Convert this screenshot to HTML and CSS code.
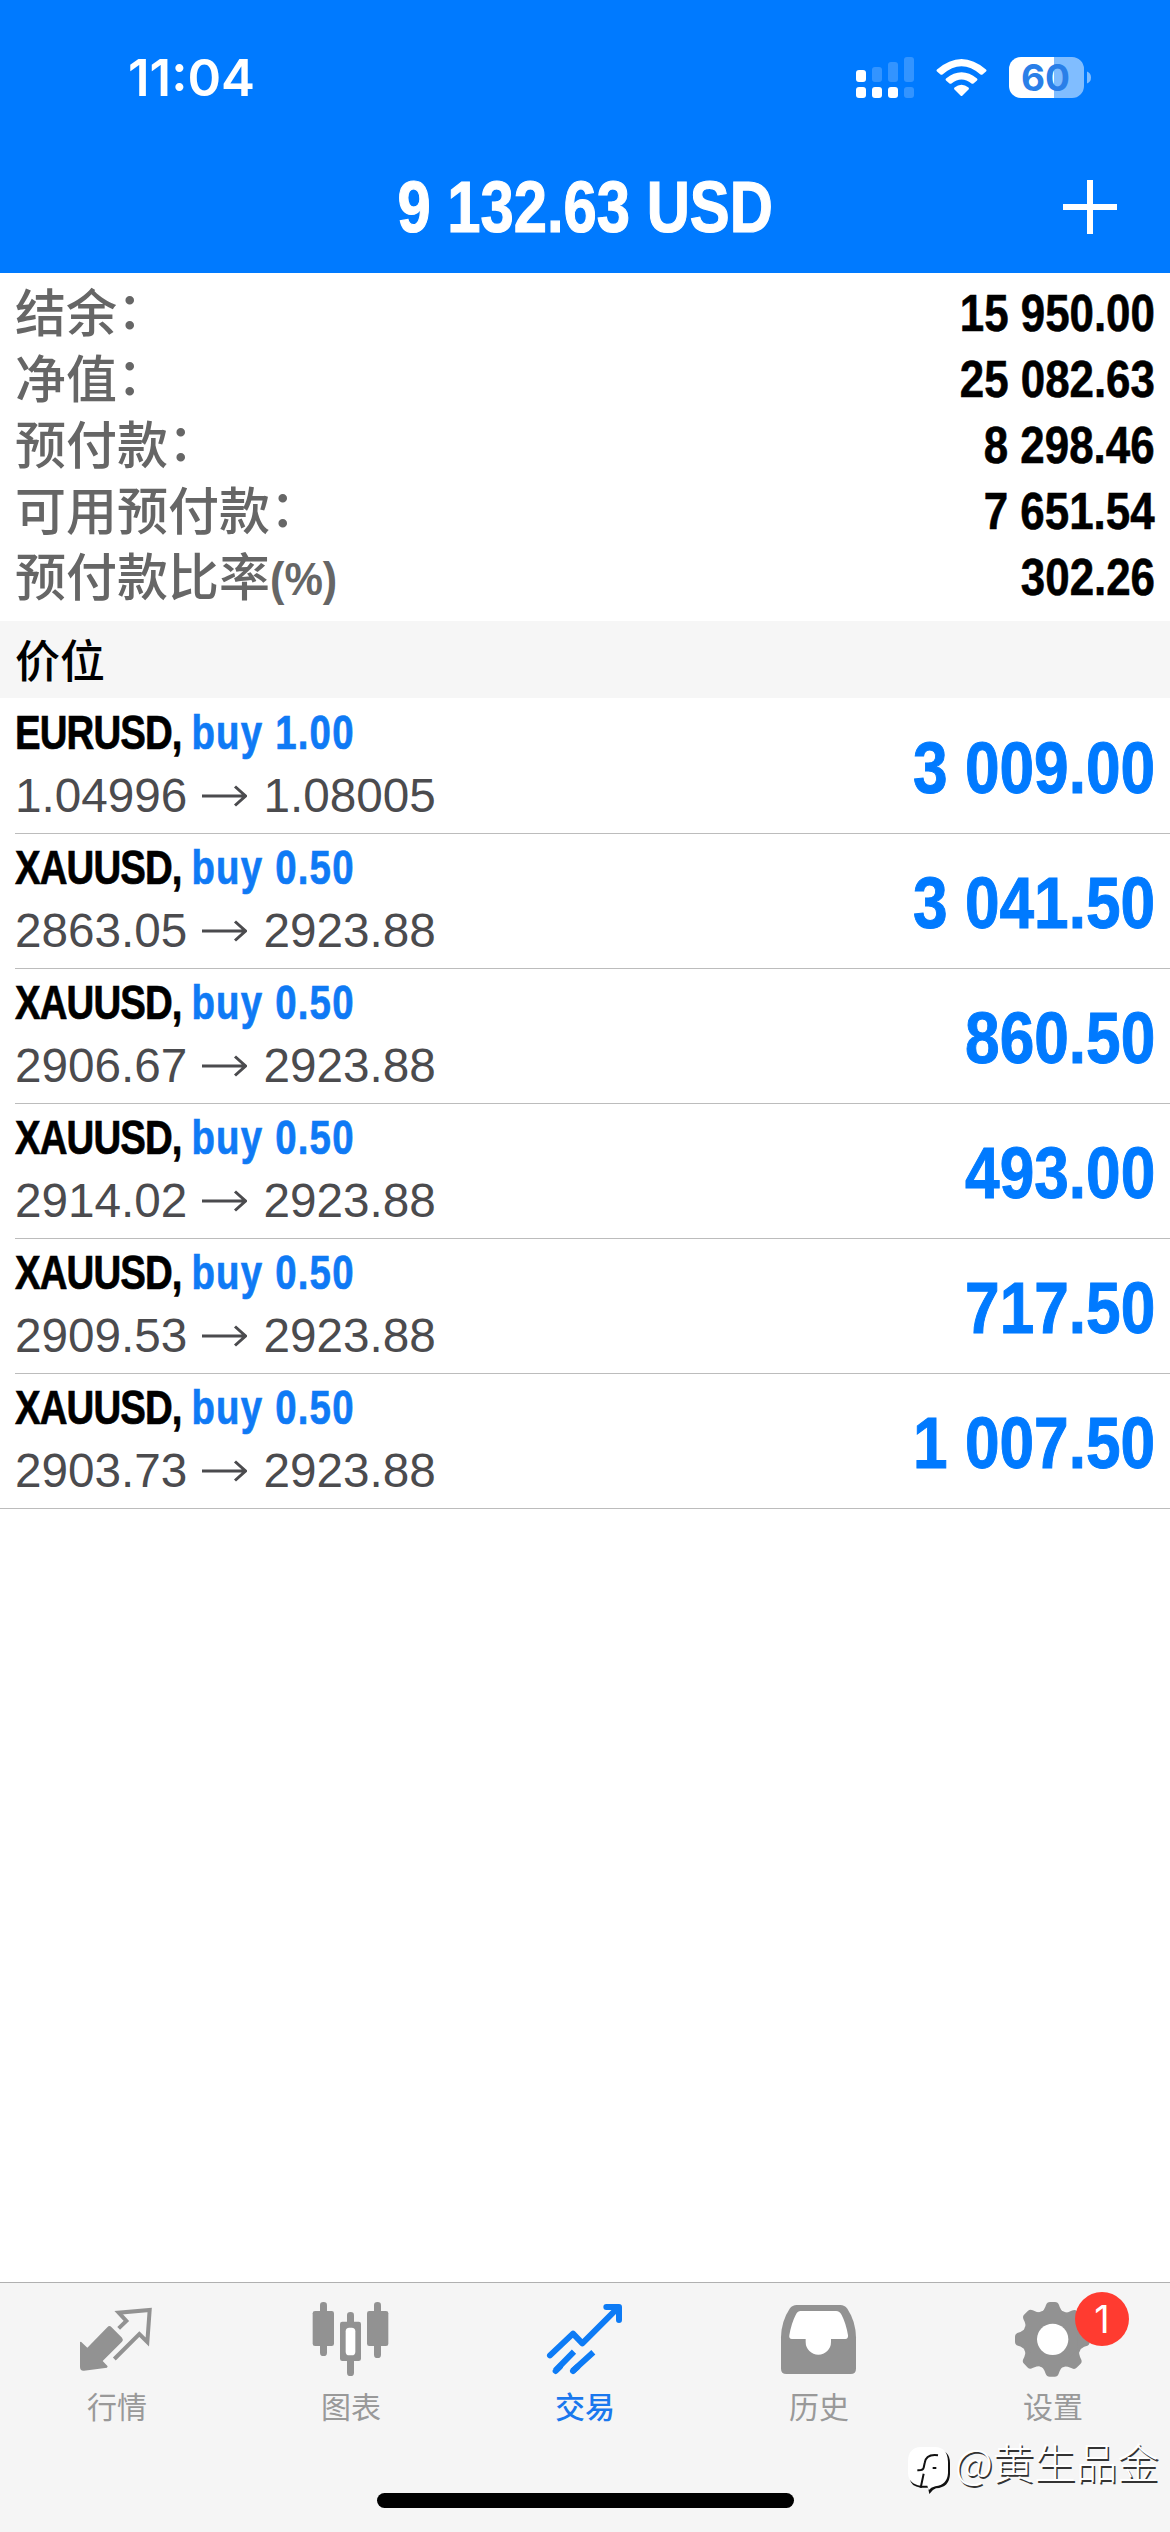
FILE: index.html
```html
<!DOCTYPE html>
<html lang="zh-CN">
<head>
<meta charset="utf-8">
<title>交易</title>
<link rel="stylesheet" href="styles.css">
</head>
<body>
<div class="app">
  <header class="header">
    <div class="status">
      <span class="time">11:04</span>
      <svg class="status-icons" width="240" height="50" viewBox="852 52 240 50">
        <g fill="#fff">
          <rect x="856" y="70" width="10" height="12" rx="3"/>
          <rect x="856" y="87" width="10" height="11" rx="3"/>
          <rect x="872" y="87" width="10" height="11" rx="3"/>
          <rect x="888" y="87" width="10" height="11" rx="3"/>
        </g>
        <g fill="#fff" fill-opacity=".2">
          <rect x="872" y="67" width="10" height="15" rx="3"/>
          <rect x="888" y="62" width="10" height="20" rx="3"/>
          <rect x="904" y="57" width="10" height="25" rx="3"/>
          <rect x="904" y="87" width="10" height="11" rx="3"/>
        </g>
        <g fill="#fff">
          <path d="M937 69.500Q961.500 48.500 986 69.500Q987 70.500 986 71.500L982.500 74.500Q981.500 75 980.500 74.500Q961.500 58 942.500 74.500Q941.500 75 940.500 74.500L937 71.500Q936 70.500 937 69.500Z"/>
          <path d="M946 78.500Q961.500 66 977 78.500Q978 79.500 977 80.500L973.500 83.500Q972.500 84 971.500 83.500Q961.500 75.500 951.500 83.500Q950.500 84 949.500 83.500L946 80.500Q945 79.500 946 78.500Z"/>
          <path d="M954.500 87.500Q961.500 82 968.500 87.500Q969.500 88.500 968.500 89.500L962.500 95.500Q961.500 96.500 960.500 95.500L954.500 89.500Q953.500 88.500 954.500 87.500Z"/>
          <path d="M1021 57H1054V98H1021A12 12 0 0 1 1009 86V69A12 12 0 0 1 1021 57Z"/>
          <path fill-opacity=".5" d="M1054 57H1072A12 12 0 0 1 1084 69V86A12 12 0 0 1 1072 98H1054ZM1087 71.500Q1091 73 1091 77.500T1087 83.500Z"/>
        </g>
        <text class="battery-text" x="1045.500" y="91" text-anchor="middle">60</text>
      </svg>
    </div>
    <div class="navbar">
      <h1 class="title">9 132.63 USD</h1>
      <svg class="add" width="54" height="54" viewBox="0 0 54 54"><path d="M0 27H54M27 0V54" stroke="#fff" stroke-width="6"/></svg>
    </div>
  </header>
  <section class="summary">
    <div class="line"><span>结余<span class="colon">：</span></span><b class="num">15 950.00</b></div>
    <div class="line"><span>净值<span class="colon">：</span></span><b class="num">25 082.63</b></div>
    <div class="line"><span>预付款<span class="colon">：</span></span><b class="num">8 298.46</b></div>
    <div class="line"><span>可用预付款<span class="colon">：</span></span><b class="num">7 651.54</b></div>
    <div class="line"><span>预付款比率<span class="percent">(%)</span></span><b class="num">302.26</b></div>
  </section>
  <h2 class="section">价位</h2>
  <ul class="positions">
    <li class="position"><div><p class="deal"><span class="pair">EURUSD, </span><span class="lot">buy 1.00</span></p><p class="prices">1.04996<svg class="arrow" viewBox="0 0 45 22"><path d="M0 11H43M33 1.500L43.500 11L33 20.500"/></svg>1.08005</p></div><b class="profit">3 009.00</b></li>
    <li class="position"><div><p class="deal"><span class="pair">XAUUSD, </span><span class="lot">buy 0.50</span></p><p class="prices">2863.05<svg class="arrow" viewBox="0 0 45 22"><path d="M0 11H43M33 1.500L43.500 11L33 20.500"/></svg>2923.88</p></div><b class="profit">3 041.50</b></li>
    <li class="position"><div><p class="deal"><span class="pair">XAUUSD, </span><span class="lot">buy 0.50</span></p><p class="prices">2906.67<svg class="arrow" viewBox="0 0 45 22"><path d="M0 11H43M33 1.500L43.500 11L33 20.500"/></svg>2923.88</p></div><b class="profit">860.50</b></li>
    <li class="position"><div><p class="deal"><span class="pair">XAUUSD, </span><span class="lot">buy 0.50</span></p><p class="prices">2914.02<svg class="arrow" viewBox="0 0 45 22"><path d="M0 11H43M33 1.500L43.500 11L33 20.500"/></svg>2923.88</p></div><b class="profit">493.00</b></li>
    <li class="position"><div><p class="deal"><span class="pair">XAUUSD, </span><span class="lot">buy 0.50</span></p><p class="prices">2909.53<svg class="arrow" viewBox="0 0 45 22"><path d="M0 11H43M33 1.500L43.500 11L33 20.500"/></svg>2923.88</p></div><b class="profit">717.50</b></li>
    <li class="position"><div><p class="deal"><span class="pair">XAUUSD, </span><span class="lot">buy 0.50</span></p><p class="prices">2903.73<svg class="arrow" viewBox="0 0 45 22"><path d="M0 11H43M33 1.500L43.500 11L33 20.500"/></svg>2923.88</p></div><b class="profit">1 007.50</b></li>
  </ul>
  <footer class="footer">
    <nav class="tabs">
      <a class="tab"><svg class="icon" viewBox="225 75 252 252"><path fill="#929292" d="M240 216L243 215L262 233L322 172Q328 165 334 171L366 203Q371 209 366 215L308 273L323 289L321 293L252 302Q240 303 240 291Z"/><path fill="none" stroke="#929292" stroke-width="12" d="M356 175L379 153L356 128L449 120L442 216L418 192L343 267"/></svg>行情</a>
      <a class="tab"><svg class="icon" viewBox="927 75 252 252"><g fill="#929292"><rect x="938" y="123" width="64" height="105" rx="7"/><rect x="960" y="96" width="21" height="162" rx="10"/><rect x="1101" y="123" width="64" height="105" rx="7"/><rect x="1122" y="96" width="21" height="168" rx="10"/><rect x="1020" y="155" width="63" height="118" rx="7"/><rect x="1041" y="126" width="21" height="192" rx="10"/></g><rect x="1037" y="173" width="29" height="83" rx="11" fill="#fff"/></svg>图表</a>
      <a class="tab active"><svg class="icon" viewBox="429 75 252 252"><g fill="none" stroke="#0d7bf5" stroke-width="18"><path stroke-linecap="round" stroke-linejoin="round" d="M450 256L519 191L547 220L655 112M619 111H657V150"/><path d="M466 302L522 245M518 303L580 247"/><path stroke-linecap="round" d="M467 303L480 290M519 303L532 291"/></g></svg>交易</a>
      <a class="tab"><svg class="icon" viewBox="21 75 252 252"><path fill="#929292" d="M80 105H211Q224 105 232 116Q257 153 258 202V296Q258 312 242 312H49Q33 312 33 296V202Q34 153 59 116Q67 105 80 105Z"/><path fill="#fff" d="M92 123H198Q209 123 215 135Q228 160 234 196Q235 207 226 207H183V216A38 38 0 0 1 107 216V207H66Q56 207 58 196Q64 160 77 135Q82 123 92 123Z"/></svg>历史</a>
      <a class="tab"><svg class="icon" viewBox="723 75 252 252"><g fill="#929292"><circle cx="847" cy="208" r="90"/><g id="teeth"><path id="tooth" d="M810 132Q824 120 828 105Q831 96 840 96H855Q864 96 867 105Q871 120 885 132Z"/><use href="#tooth" transform="rotate(45 847 208)"/><use href="#tooth" transform="rotate(90 847 208)"/><use href="#tooth" transform="rotate(135 847 208)"/></g><use href="#teeth" transform="rotate(180 847 208)"/></g><circle cx="848" cy="208" r="47" fill="#fff"/></svg>设置<span class="badge">1</span></a>
    </nav>
    <div class="home"></div>
    <div class="watermark"><svg width="42" height="47" viewBox="22 50 126 141"><path fill="#111" d="M66 58H106Q148 58 148 98V132Q146 172 106 174Q94 178 86 191L82 172H60Q30 168 28 146Z"/><path fill="#fff" d="M60 50H104Q141 52 142 94V128Q140 164 104 168Q90 171 84 180L80 166H60Q24 162 22 128V90Q24 52 60 50Z"/><path fill="none" stroke="#111" stroke-width="6" d="M112 75Q76 70 72 98L69 112Q68 121 50 120M69 130L60 172M96 113H107"/></svg><span>@黄生品金</span></div>
  </footer>
</div>
</body>
</html>
```

FILE: styles.css
```css
* { box-sizing: border-box; margin: 0; padding: 0; }
body {
  width: 1170px; height: 2532px; overflow: hidden; background: #fff;
  font-family: "Liberation Sans", "Noto Sans CJK SC", sans-serif;
}
.app { display: flex; flex-direction: column; height: 2532px; }
.header { height: 273px; background: #007aff; color: #fff; flex: none; }
.status { height: 140px; padding: 52px 78px 0 128px; display: flex; justify-content: space-between; align-items: flex-start; }
.time { font: 600 51px/52px Inter, sans-serif; }
.status-icons { display: block; }
.battery-text { font: 700 37px Inter, sans-serif; fill: #2a7fe8; }
.navbar { height: 133px; display: grid; grid-template-columns: 1fr auto 1fr; align-items: center; padding: 0 53px; }
.title { grid-column: 2; font: bold 72px/80px "Liberation Sans", sans-serif; transform: scaleX(.83); white-space: nowrap; -webkit-text-stroke: 1.200px; }
.add { grid-column: 3; justify-self: end; }
.summary { height: 348px; padding: 5px 15px 0; flex: none; }
.line { height: 66px; display: flex; justify-content: space-between; font: 500 51px/65px "Noto Sans CJK SC", sans-serif; color: #666; }
.colon { line-height: 1; vertical-align: 3px; }
.percent { display: inline-block; font: bold 47px/50px "Liberation Sans", sans-serif; transform: scaleX(.92); transform-origin: left; vertical-align: 1px; }
.num { padding-top: 3px; font: bold 51px/66px "Liberation Sans", sans-serif; color: #000; transform: scaleX(.86); transform-origin: right; -webkit-text-stroke: .6px; }
.section { height: 77px; padding-left: 15px; background: #f6f6f6; font: 500 45px/75px "Noto Sans CJK SC", sans-serif; flex: none; }
.positions { list-style: none; flex: 1; padding-top: 1px; }
.position { height: 135px; margin-left: 15px; padding-right: 15px; border-bottom: 1px solid #bcbcbc; display: flex; justify-content: space-between; }
.position:last-child { margin-left: 0; padding-left: 15px; }
.deal { height: 66px; padding-top: 6px; font: bold 48px/56px "Liberation Sans", sans-serif; transform: scaleX(.8); transform-origin: left; white-space: pre; -webkit-text-stroke: .7px; }
.pair { letter-spacing: -1.100px; }
.lot { color: #0f7af5; letter-spacing: 1.500px; }
.prices { display: flex; align-items: center; font-size: 47.700px; line-height: 62px; color: #4b4b4e; }
.arrow { width: 45px; height: 22px; margin: 0 16px 0 15px; fill: none; stroke: #4b4b4e; stroke-width: 3; }
.profit { font-size: 73px; line-height: 137px; color: #007aff; transform: scaleX(.852); transform-origin: right; -webkit-text-stroke: 1px; }
.footer { position: relative; height: 250px; background: #f5f5f5; border-top: 1px solid #b0b0b0; flex: none; }
.tabs { display: grid; grid-template-columns: repeat(5, 1fr); padding-top: 12px; }
.tab { position: relative; display: flex; flex-direction: column; align-items: center; font: 400 30px/44px "Noto Sans CJK SC", sans-serif; color: #999; }
.icon { width: 84px; height: 84px; margin-bottom: 4px; }
.active { color: #1a78ee; font-weight: 500; }
.badge { position: absolute; left: 139px; top: -3px; width: 54px; height: 54px; border-radius: 50%; background: #ff3b30; color: #fff; font: 400 38px/54px Inter, sans-serif; text-align: center; }
.home { width: 417px; height: 15px; border-radius: 8px; background: #000; margin: 66px 0 0 377px; }
.watermark { position: absolute; left: 908px; top: 148px; display: flex; gap: 5px; color: #fff; font: 300 41.500px/60px "Noto Sans CJK SC", sans-serif; text-shadow: 1.500px 1.500px 0 #333; white-space: nowrap; }
.watermark svg { margin-top: 16px; }
```
